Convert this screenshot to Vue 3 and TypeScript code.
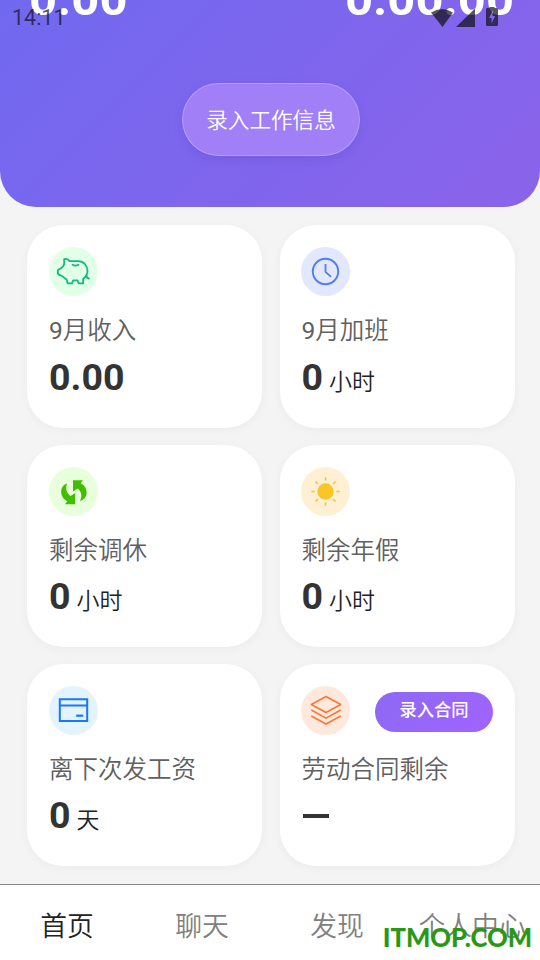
<script setup lang="ts">
interface Stat {
  icon: string
  month?: string
  label: string
  value: string
  unit?: string
  action?: string
}

const stats: Stat[] = [
  { icon: 'piggy', month: '9', label: '月收入', value: '0.00' },
  { icon: 'clock', month: '9', label: '月加班', value: '0', unit: '小时' },
  { icon: 'swap', label: '剩余调休', value: '0', unit: '小时' },
  { icon: 'sun', label: '剩余年假', value: '0', unit: '小时' },
  { icon: 'bank', label: '离下次发工资', value: '0', unit: '天' },
  { icon: 'layers', label: '劳动合同剩余', value: '—', action: '录入合同' },
]

const tabs: string[] = ['首页', '聊天', '发现', '个人中心']
const rays: number[] = [0, 45, 90, 135, 180, 225, 270, 315]
</script>

<template>
  <div class="screen">
    <header class="hero">
      <div class="totals">
        <span>0.00</span>
        <span>0.00.00</span>
      </div>
      <button class="entry">录入工作信息</button>
      <div class="status">
        <span class="time">14:11</span>
        <svg class="signals" width="68" height="22" viewBox="0 0 68 22">
          <path d="M1 6.500Q12 -.5 23 6.500L12.500 21Z" />
          <path d="M45 2.500V21H26Z" />
          <path fill-rule="evenodd" d="M57.500 2h2V1h5v1h2q1.500 0 1.500 1.500v15q0 1.500-1.500 1.500h-9q-1.500 0-1.500-1.500v-15Q56 2 57.500 2ZM62.600 5l-3.600 7h2.500v5.500l3.700-7.500h-2.600Z" />
        </svg>
      </div>
    </header>

    <main class="grid">
      <section v-for="s in stats" :key="s.label" class="card">
        <div class="top">
          <div class="badge" :class="s.icon">
            <svg width="49" height="49" viewBox="0 0 49 49" fill="none">
              <g v-if="s.icon === 'piggy'" stroke="#13b981" stroke-width="1.800" stroke-linejoin="round" stroke-linecap="round">
                <path d="M15.200 12.200C17.500 11.400 19.700 12.500 20.700 14.200H29C35 14.200 38.500 19 38.500 24C38.500 27.500 36.500 30 34.200 32V36.300H29.700L28.500 33.400H24.200L22.900 36.300H18.600L17.500 32.300C15.300 31.500 13.900 28.700 11.600 28.300C9.500 27.900 8.800 27.500 8.800 25.800V23.800C8.800 22.300 10.400 22.400 11.700 21.500C13.700 20 15.200 18.400 15.200 16.500Z" />
                <path d="M23.500 17.800Q26.500 19.300 29.500 17.800M37.600 28.500C37.500 30.200 38.500 31.600 40 31.500" />
              </g>
              <g v-else-if="s.icon === 'clock'" stroke="#537cf3">
                <circle cx="24.500" cy="24.500" r="12.700" stroke-width="1.900" />
                <path d="M24.500 17V24.800L30 29.800" stroke-width="1.800" />
              </g>
              <g v-else-if="s.icon === 'swap'" fill="#43bd00">
                <path d="M24 13.200H34L31.700 16.200C39.500 20 40 31.500 31 34C33.500 28.500 32.500 24.500 28.700 21.400L24 24.500Z" />
                <path d="M26.200 37.300H16L18.300 34.300C10.500 30.500 10 19 18 16.500C16.300 22 17.500 26 21.500 29L26.200 26Z" />
              </g>
              <g v-else-if="s.icon === 'sun'">
                <circle cx="24.500" cy="24.500" r="8.200" fill="#fac528" />
                <path v-for="a in rays" :key="a" d="M24.500 10.300V13.700" :transform="`rotate(${a} 24.500 24.500)`" stroke="#fac528" stroke-width="1.600" />
              </g>
              <g v-else-if="s.icon === 'bank'" stroke="#1677ff">
                <path d="M10.800 13.300H38.200V35H10.800ZM10.800 19.400H38.200" stroke-width="2" />
                <path d="M27.200 29.700H34.200" stroke-width="2.200" />
              </g>
              <g v-else stroke="#fc7531" stroke-width="1.500" stroke-linejoin="round">
                <path d="M10.300 18.500L25 10.500L39.700 18.500L25 26.500Z" />
                <path d="M10.300 24L25 32.200L39.700 24M10.300 30L25 38L39.700 30" />
              </g>
            </svg>
          </div>
          <button v-if="s.action" class="action">{{ s.action }}</button>
        </div>
        <div class="label"><span v-if="s.month" class="month">{{ s.month }}</span>{{ s.label }}</div>
        <div class="value">
          <i v-if="s.value === '—'" class="dash"></i>
          <template v-else>
            <b>{{ s.value }}</b><span v-if="s.unit">{{ s.unit }}</span>
          </template>
        </div>
      </section>
    </main>

    <nav class="tabs">
      <span v-for="(t, i) in tabs" :key="t" :class="{ active: i === 0 }">{{ t }}</span>
      <div class="mark">ITMOP.COM</div>
    </nav>
  </div>
</template>

<style>
body {
  background: #f4f4f4;
}
</style>

<style scoped>
.screen {
  width: 540px;
  height: 960px;
  overflow: hidden;
  display: flex;
  flex-direction: column;
  background: #f4f4f4;
  font-family: Roboto, "Noto Sans CJK SC", sans-serif;
  font-weight: 350;
}
button {
  border: 0;
  margin: 0;
  padding: 0;
  font: inherit;
  color: #fff;
}
.hero {
  position: relative;
  flex: none;
  height: 207px;
  overflow: hidden;
  display: flex;
  flex-direction: column;
  align-items: center;
  border-radius: 0 0 36px 36px;
  background: linear-gradient(135deg, #7069f0, #8b63ea);
}
.totals {
  align-self: stretch;
  box-sizing: border-box;
  height: 83px;
  padding: 0 26px 0 29px;
  display: flex;
  justify-content: space-between;
  font-size: 49px;
  line-height: 56px;
  font-weight: 700;
  color: #fff;
}
.totals span {
  margin-top: -29px;
}
.status {
  position: absolute;
  inset: 6px 42px auto 12px;
  display: flex;
  justify-content: space-between;
  height: 22px;
  color: rgba(20, 20, 30, 0.72);
}
.time {
  font-size: 21.500px;
  line-height: 24px;
  font-weight: 400;
}
.signals {
  fill: rgba(15, 15, 20, 0.7);
}
.entry {
  box-sizing: border-box;
  width: 178px;
  height: 73px;
  margin-left: 2px;
  padding-bottom: 2px;
  border: 1px solid rgba(255, 255, 255, 0.22);
  border-radius: 37px;
  background: #a180f7;
  box-shadow: 0 4px 10px rgba(70, 40, 150, 0.14);
  font-size: 21.6px;
}
.grid {
  flex: none;
  box-sizing: border-box;
  display: grid;
  grid-template-columns: 235px 235px;
  grid-auto-rows: 202.2px;
  gap: 17.1px 18px;
  padding: 18.4px 25px 0 27px;
  height: 677px;
}
.card {
  box-sizing: border-box;
  padding: 22px;
  border-radius: 36px;
  background: #fff;
  box-shadow: 0 2px 10px rgba(0, 0, 0, 0.04);
}
.card:nth-child(even) {
  padding-left: 21.4px;
}
.top {
  display: flex;
  justify-content: space-between;
  height: 49px;
}
.badge {
  width: 49px;
  height: 49px;
  border-radius: 50%;
}
.badge svg {
  display: block;
}
.piggy { background: #e2ffe7; }
.clock { background: #e1e8ff; }
.swap { background: #e8ffdd; }
.sun { background: #fff0d4; }
.bank { background: #e4f4ff; }
.layers { background: #ffe9dd; }
.action {
  width: 118px;
  height: 40px;
  margin-top: 6px;
  padding-bottom: 6px;
  border-radius: 20px;
  background: linear-gradient(135deg, #8c6af3, #a163ff);
  font-size: 17.3px;
  font-weight: 500;
}
.label {
  margin-top: 17px;
  font-size: 24.5px;
  line-height: 36px;
  color: #606060;
  white-space: nowrap;
}
.month {
  font-weight: 400;
}
.value {
  display: flex;
  align-items: baseline;
  margin-top: 4.500px;
  line-height: 46px;
  color: #333;
}
.value b {
  font-size: 37.500px;
  font-weight: 700;
}
.value span {
  margin-left: 6px;
  font-size: 23px;
  color: #222;
}
.dash {
  width: 26px;
  height: 4px;
  margin: 21.500px 0 0 1.500px;
  background: #333;
}
.tabs {
  position: relative;
  box-sizing: border-box;
  height: 76px;
  padding-top: 2px;
  border-top: 1px solid #888;
  display: grid;
  grid-template-columns: repeat(4, 1fr);
  background: #fff;
  font-size: 26.800px;
  line-height: 80px;
  text-align: center;
  color: #808080;
}
.tabs span {
  margin-left: -1px;
}
.tabs .active {
  color: #222;
}
.mark {
  position: absolute;
  right: 8px;
  top: 34px;
  font: 900 25.600px/36px Lato, sans-serif;
  color: #299816;
}
</style>
